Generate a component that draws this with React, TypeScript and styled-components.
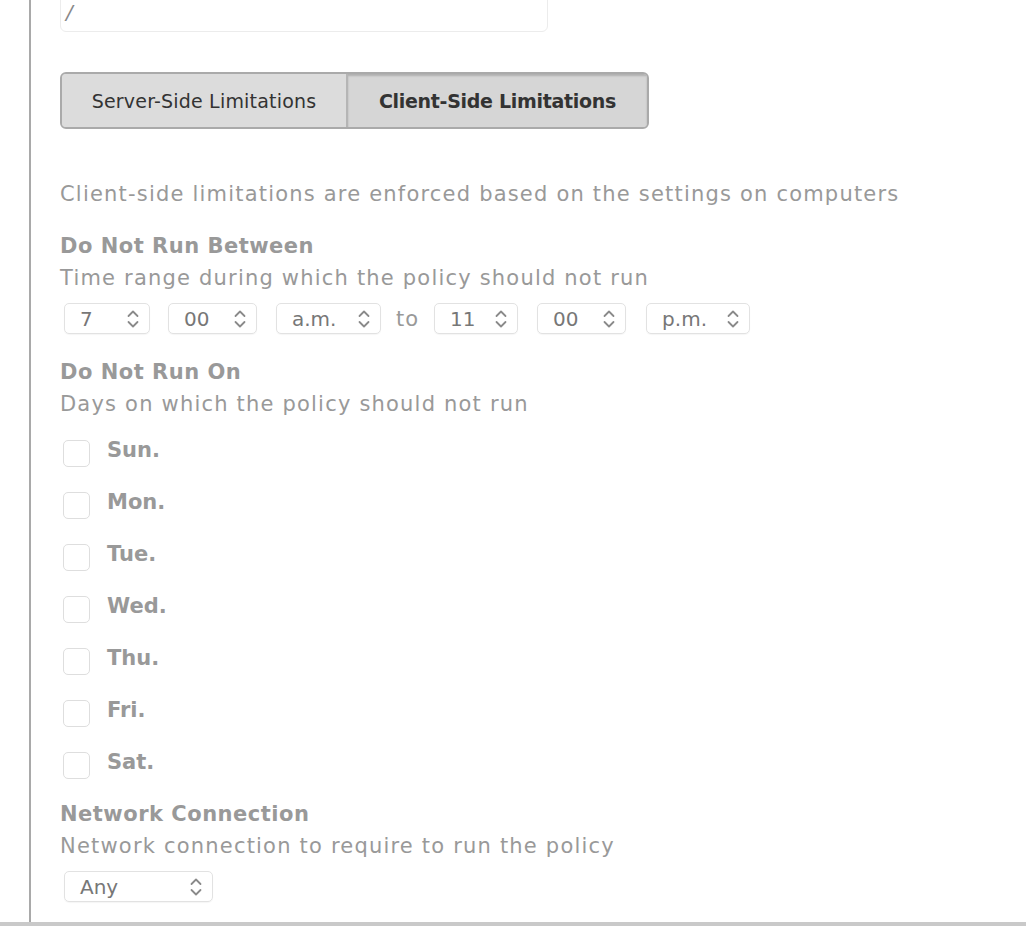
import React from 'react';
import styled, { createGlobalStyle } from 'styled-components';

const GlobalStyle = createGlobalStyle`
    html, body {
        margin: 0;
        padding: 0;
        background: #fff;
        font-family: "DejaVu Sans", "Open Sans", sans-serif;
        overflow: hidden;
    }
`;

const Page = styled.div`
    width: 1026px;
    height: 926px;
    overflow: hidden;
    display: flex;
    flex-direction: column;
`;

const Panel = styled.div`
    flex: 1;
    margin-left: 29px;
    border-left: 2px solid #a9a9a9;
    padding-left: 29px;
    overflow: hidden;
`;

const Footer = styled.div`
    height: 4px;
    background: #c9c9c9;
`;

const PathInput = styled.div`
    margin-top: -12px;
    width: 488px;
    height: 44px;
    box-sizing: border-box;
    border: 1px solid #ececec;
    border-radius: 6px;
    padding: 8px 0 0 5px;
    font-size: 20px;
    font-style: italic;
    color: #888;
    line-height: 30px;
`;

const Tabs = styled.div`
    margin-top: 40px;
    display: flex;
    width: 589px;
    height: 57px;
    box-sizing: border-box;
    border: 2px solid #aaa;
    border-radius: 6px;
    overflow: hidden;
    background: #dcdcdc;
`;

const Tab = styled.div<{ active?: boolean }>`
    flex: ${p => (p.active ? '0 0 299px' : '1')};
    display: flex;
    align-items: center;
    justify-content: center;
    font-size: 19px;
    font-weight: ${p => (p.active ? 700 : 400)};
    letter-spacing: ${p => (p.active ? '-0.3px' : '0.2px')};
    color: #333;
    border-left: ${p => (p.active ? '2px solid #b5b5b5' : 'none')};
    box-shadow: ${p => (p.active ? 'inset 0 2px 2px rgba(0,0,0,0.18)' : 'none')};
    background: ${p => (p.active ? '#d6d6d6' : '#dcdcdc')};
`;

const Intro = styled.p`
    margin: 50px 0 0;
    font-size: 21px;
    letter-spacing: 1.2px;
    line-height: 30px;
    color: #999;
`;

const Section = styled.div<{ top: number }>`
    margin-top: ${p => p.top}px;
    display: flex;
    flex-direction: column;
`;

const Heading = styled.div`
    font-size: 21px;
    font-weight: 700;
    letter-spacing: 0.5px;
    color: #999;
    line-height: 30px;
`;

const Sub = styled.div`
    font-size: 21px;
    letter-spacing: 1.2px;
    color: #999;
    line-height: 34px;
`;

const SelectRow = styled.div`
    margin-top: 8px;
    display: flex;
    align-items: center;
    padding-left: 4px;
`;

const Select = styled.div<{ w: number; gap?: number }>`
    width: ${p => p.w}px;
    height: 31px;
    box-sizing: border-box;
    margin-right: ${p => p.gap ?? 0}px;
    border: 1px solid #e2e2e2;
    border-radius: 5px;
    box-shadow: 0 1px 1px rgba(0,0,0,0.04);
    display: flex;
    align-items: center;
    justify-content: space-between;
    padding: 0 10px 0 15px;
    font-size: 20px;
    color: #777;
`;

const To = styled.span`
    font-size: 21px;
    letter-spacing: 1px;
    color: #999;
    margin-right: 15px;
`;

const DayList = styled.div`
    margin-top: 15px;
    display: flex;
    flex-direction: column;
    gap: 24px;
`;

const Day = styled.label`
    display: flex;
    align-items: center;
    height: 28px;
    padding-left: 3px;
    font-size: 21px;
    font-weight: 700;
    color: #999;
`;

const Box = styled.span`
    width: 27px;
    height: 27px;
    box-sizing: border-box;
    border: 1px solid #dedede;
    border-radius: 5px;
    margin-right: 17px;
    margin-top: 6px;
`;

const Stepper = () => (
    <svg width="12" height="20" viewBox="0 0 12 20" fill="none" stroke="#8a8a8a" strokeWidth="1.8" strokeLinecap="round" strokeLinejoin="round">
        <path d="M1.5 7 L6 2.5 L10.5 7" />
        <path d="M1.5 13 L6 17.5 L10.5 13" />
    </svg>
);

const days = ['Sun.', 'Mon.', 'Tue.', 'Wed.', 'Thu.', 'Fri.', 'Sat.'];

const App: React.FC = () => (
    <Page>
        <GlobalStyle />
        <Panel>
            <PathInput>/</PathInput>
            <Tabs>
                <Tab>Server-Side Limitations</Tab>
                <Tab active>Client-Side Limitations</Tab>
            </Tabs>
            <Intro>Client-side limitations are enforced based on the settings on computers</Intro>
            <Section top={22}>
                <Heading>Do Not Run Between</Heading>
                <Sub>Time range during which the policy should not run</Sub>
                <SelectRow>
                    <Select w={86} gap={18}>7<Stepper /></Select>
                    <Select w={89} gap={19}>00<Stepper /></Select>
                    <Select w={105} gap={15}>a.m.<Stepper /></Select>
                    <To>to</To>
                    <Select w={84} gap={19}>11<Stepper /></Select>
                    <Select w={89} gap={20}>00<Stepper /></Select>
                    <Select w={104}>p.m.<Stepper /></Select>
                </SelectRow>
            </Section>
            <Section top={23}>
                <Heading>Do Not Run On</Heading>
                <Sub>Days on which the policy should not run</Sub>
                <DayList>
                    {days.map(d => (
                        <Day key={d}>
                            <Box />
                            {d}
                        </Day>
                    ))}
                </DayList>
            </Section>
            <Section top={23}>
                <Heading>Network Connection</Heading>
                <Sub>Network connection to require to run the policy</Sub>
                <SelectRow>
                    <Select w={149}>Any<Stepper /></Select>
                </SelectRow>
            </Section>
        </Panel>
        <Footer />
    </Page>
);

export default App;
